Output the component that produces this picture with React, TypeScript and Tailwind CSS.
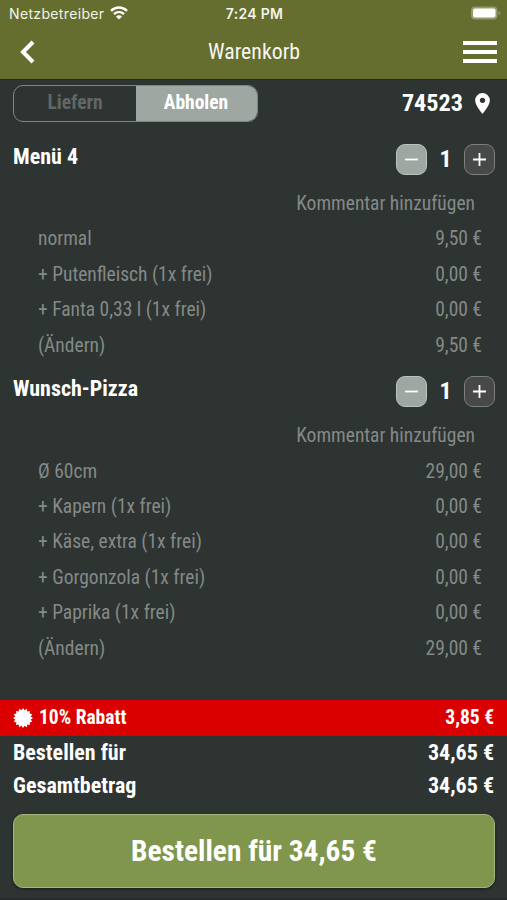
import React from 'react';

type Line = [string, string];

const menu: Line[] = [
  ['normal', '9,50 €'],
  ['+ Putenfleisch (1x frei)', '0,00 €'],
  ['+ Fanta 0,33 l (1x frei)', '0,00 €'],
  ['(Ändern)', '9,50 €'],
];
const pizza: Line[] = [
  ['Ø 60cm', '29,00 €'],
  ['+ Kapern (1x frei)', '0,00 €'],
  ['+ Käse, extra (1x frei)', '0,00 €'],
  ['+ Gorgonzola (1x frei)', '0,00 €'],
  ['+ Paprika (1x frei)', '0,00 €'],
  ['(Ändern)', '29,00 €'],
];

// Outline of the discount seal: sixteen short spikes around a disc.
const seal = Array.from({ length: 32 }, (_, i) => {
  const r = i % 2 ? 7.9 : 10;
  const a = (i * Math.PI) / 16;
  return `${(r * Math.sin(a)).toFixed(2)},${(-r * Math.cos(a)).toFixed(2)}`;
}).join(' ');

function StatusBar() {
  return (
    <div className="flex h-7 items-center justify-between pl-[9px] pr-[6px] font-['Inter',sans-serif] text-[14px] text-[#f3f4e8]">
      <div className="flex w-[190px] items-center gap-[6px]">
        <span className="-mt-px tracking-[0.35px]">Netzbetreiber</span>
        <svg width="18" height="14" viewBox="0 0 18 14" fill="none" stroke="#fff" strokeWidth="2.4" className="-mt-0.5">
          <path d="M1 4.9C5.6.4 12.4.4 17 4.9" />
          <path d="M4 8.2c2.9-2.8 7.1-2.8 10 0" />
          <path d="M9 13.6 5.9 10.5c1.7-1.6 4.5-1.6 6.2 0z" fill="#fff" stroke="none" />
        </svg>
      </div>
      <span className="-mt-px mr-[1px] text-[14px] font-semibold tracking-[0.3px]">7:24 PM</span>
      <div className="flex w-[190px] justify-end">
        <svg width="31" height="14" viewBox="0 0 31 14" className="-mt-0.5">
          <rect x="1" y="0.5" width="26.5" height="13" rx="4" fill="#949a70" />
          <rect x="3" y="2.5" width="22.5" height="9" rx="2" fill="#fff" />
          <path d="M28.6 4.8c2.2.9 2.2 3.500 0 4.400z" fill="#949a70" />
        </svg>
      </div>
    </div>
  );
}

function Item({ name, lines }: { name: string; lines: Line[] }) {
  return (
    <section className="-mb-[1.8px]">
      <div className="flex h-[63px] items-start justify-between pl-[13px] pr-3">
        <h2 className="mt-[14.5px] text-[22px] leading-[25px] font-bold text-white">{name}</h2>
        <div className="mt-[14px] flex items-center">
          <button className="flex size-[31px] items-center justify-center rounded-[9px] border border-[#bac2bd] bg-[#9ea7a2]">
            <svg width="15" height="15" viewBox="0 0 15 15" stroke="#fff" strokeWidth="1.8"><path d="M1 7.500h13" /></svg>
          </button>
          <span className="w-[37px] pt-px text-center text-[24px] leading-[31px] font-bold text-white">1</span>
          <button className="flex size-[31px] items-center justify-center rounded-[9px] border border-[#7b7f7d] bg-[#484848]">
            <svg width="15" height="15" viewBox="0 0 15 15" stroke="#fff" strokeWidth="1.8"><path d="M1 7.500h13M7.500 1v13" /></svg>
          </button>
        </div>
      </div>
      <div className="h-[29.4px] pr-8 text-right text-[19.5px] leading-[24px]">Kommentar hinzufügen</div>
      {lines.map(([a, b], i) => (
        <div key={i} className="flex h-[35.4px] items-center justify-between pl-[38px] pr-[25px] text-[19.5px]">
          <span>{a}</span>
          <span>{b}</span>
        </div>
      ))}
    </section>
  );
}

export default function App() {
  return (
    <div className="flex h-[900px] w-[507px] flex-col overflow-hidden border-b-2 border-[#262a2b] bg-[#2d3432] font-['Roboto_Condensed','Roboto',sans-serif] text-[#858987]">
      <header className="h-[80px] shrink-0 border-b border-[#242a26] bg-[#656d2f]">
        <StatusBar />
        <div className="flex h-[48px] items-center justify-between pl-[20px] pr-[10px]">
          <svg width="34" height="24" viewBox="0 0 34 24" fill="none" stroke="#fff" strokeWidth="4"><path d="M13 2 3 12l10 10" /></svg>
          <h1 className="mr-[9px] text-[21.8px] text-[#f6f7ee]">Warenkorb</h1>
          <svg width="34" height="24" viewBox="0 0 34 24" fill="#fff"><path d="M0 1h34v4H0zM0 10h34v4H0zM0 19h34v4H0z" /></svg>
        </div>
      </header>
      <div className="flex h-[49px] shrink-0 items-start justify-between pl-[13px] pr-[17px] pt-[5px]">
        <div className="flex h-[37px] w-[245px] overflow-hidden rounded-[10px] border border-[#7e8582] text-[19.5px] font-bold">
          <div className="flex w-[122px] items-center justify-center pb-px text-[#626765]">Liefern</div>
          <div className="flex flex-1 items-center justify-center bg-[#9ea7a2] pr-px pb-px text-white">Abholen</div>
        </div>
        <div className="flex h-[37px] items-center gap-[12px] text-[24.2px] font-bold text-white">
          74523
          <svg width="15" height="21" viewBox="0 0 14 20" fill="#fff" className="-mt-px"><path fillRule="evenodd" d="M7 0a7 7 0 0 0-7 7c0 5.200 7 13 7 13s7-7.800 7-13a7 7 0 0 0-7-7m0 4.500a2.500 2.500 0 1 1 0 5 2.500 2.500 0 0 1 0-5" /></svg>
        </div>
      </div>
      <main className="flex-1">
        <Item name="Menü 4" lines={menu} />
        <Item name="Wunsch-Pizza" lines={pizza} />
      </main>
      <footer className="h-[198px] shrink-0 text-white">
        <div className="flex h-[36px] items-center justify-between bg-[#db0000] px-[13px] text-[19.5px] font-bold">
          <div className="flex items-center gap-[6px]">
            <svg width="20" height="20" viewBox="-10 -10 20 20" fill="#fff" className="-mt-px"><polygon points={seal} /></svg>
            <span>10% Rabatt</span>
          </div>
          <span>3,85 €</span>
        </div>
        <div className="flex h-[33px] items-center justify-between px-[13px] text-[22px] font-bold"><span>Bestellen für</span><span>34,65 €</span></div>
        <div className="flex h-[33px] items-center justify-between px-[13px] text-[22px] font-bold"><span>Gesamtbetrag</span><span>34,65 €</span></div>
        <button className="mt-[12px] ml-[13px] flex h-[74px] w-[482px] items-center justify-center rounded-[10px] border border-[#a7b67d] bg-[#80964c] text-[29.4px] font-bold shadow-[0_1px_3px_#171c1a]">Bestellen für 34,65 €</button>
      </footer>
    </div>
  );
}
